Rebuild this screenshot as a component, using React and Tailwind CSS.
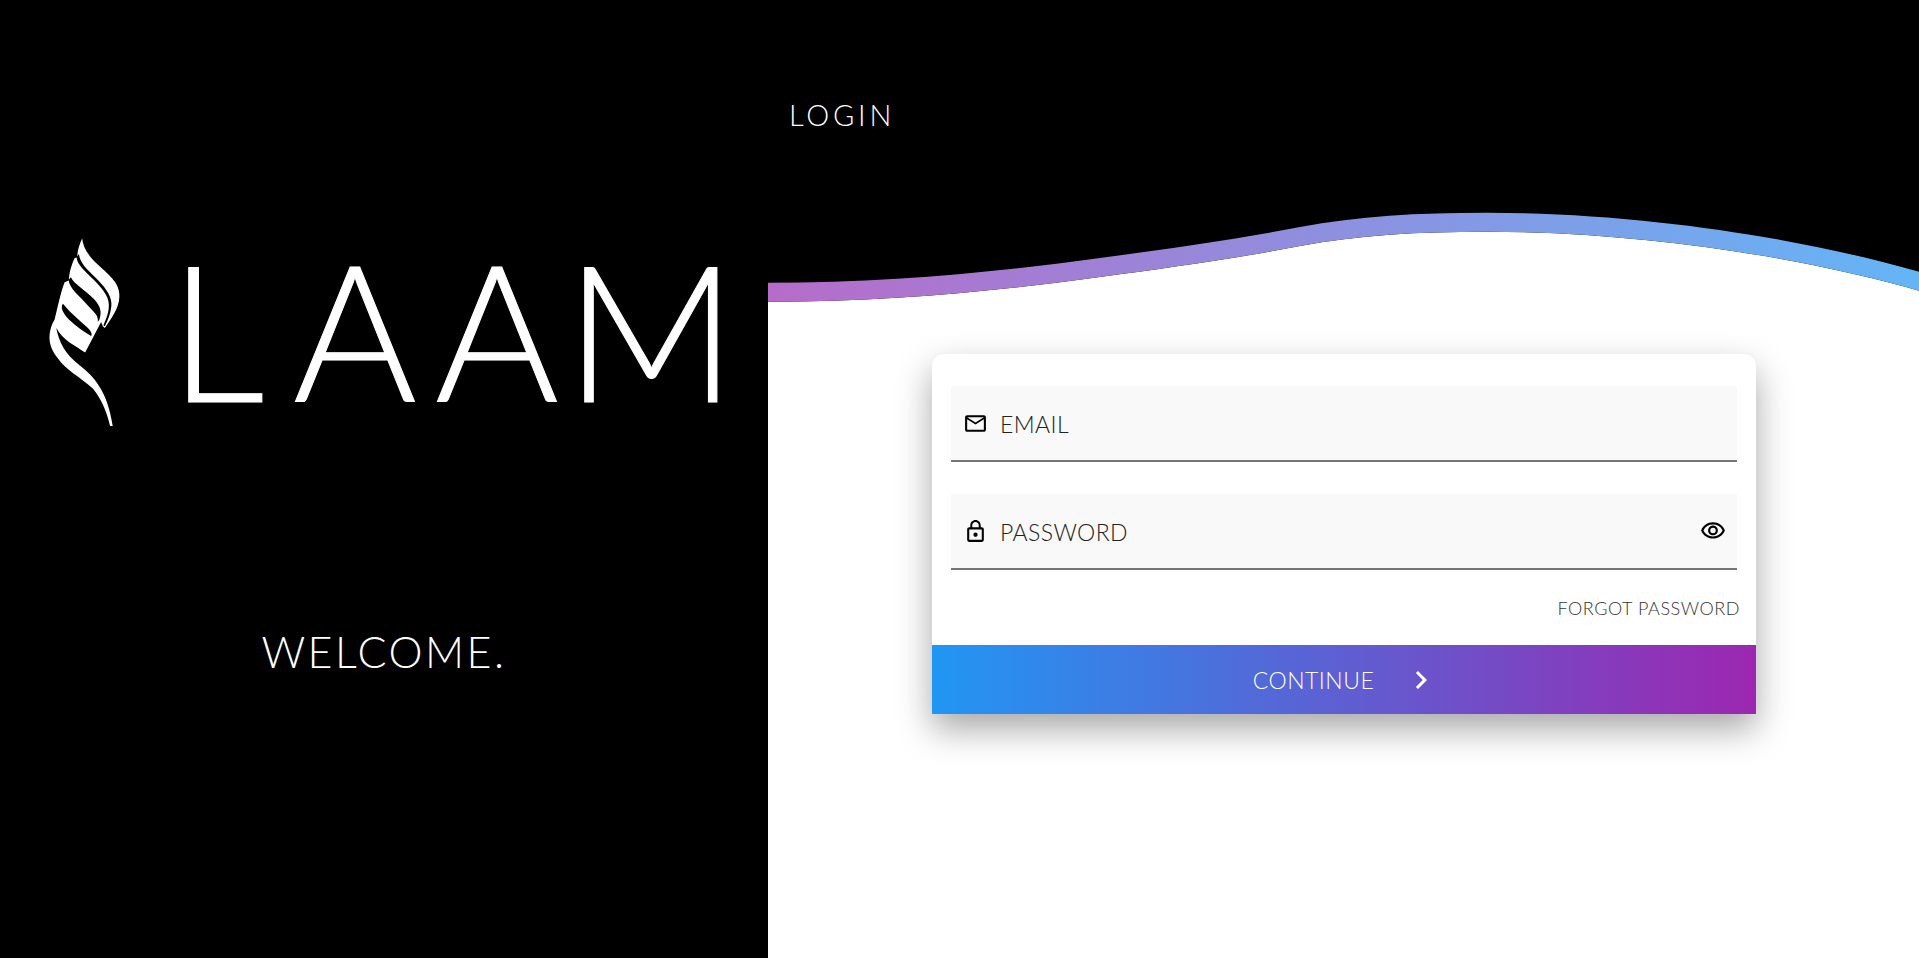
import React from 'react';
import { MdMailOutline, MdLockOutline, MdOutlineVisibility, MdChevronRight } from 'react-icons/md';

const Leaf = () => (
  <svg viewBox="55 35 220 570" className="w-[73px] h-[190px] shrink-0">
    <path
      fill="#fff"
      d="M158 38C160 60 172 85 200 112C235 145 270 170 270 208C272 245 245 280 226 308L220 303L215 290L167 382C135 360 100 345 80 308C88 350 105 385 150 420C195 455 235 500 250 603L242 603C232 560 218 525 190 490C150 455 110 435 85 400C62 370 55 345 62 315C65 300 70 290 75 282C85 240 95 195 105 170L118 165C118 145 125 120 135 98L143 95C143 75 150 55 158 38Z"
    />
    <path fill="#000" d="M141 95C143 118 165 135 195 165C225 195 242 220 238 248C236 270 228 285 222 300L226 303C238 280 247 255 246 232C244 205 222 180 200 158C175 133 152 115 148 85Z" />
    <path fill="#000" d="M117 163C120 190 150 210 175 240C195 262 208 270 205 290L210 282C218 260 213 242 195 222C165 192 135 177 124 155Z" />
    <path fill="#000" d="M100 235C92 245 98 262 118 282C140 303 165 320 185 332C190 326 183 315 172 305C150 285 125 265 100 235Z" />
  </svg>
);

const Field = ({ icon, label, right }) => (
  <div className="h-[76px] bg-[#f9f9f9] border-b-2 border-[#757575] flex items-center pl-[12px] pr-[11px]">
    <span className="w-[25px] flex justify-center text-black">{icon}</span>
    <span className="ml-[12px] pt-[2px] text-[23px] font-light text-[#222] tracking-[0.4px] uppercase">{label}</span>
    <span className="ml-auto text-black">{right}</span>
  </div>
);

export default function App() {
  return (
    <div className="flex w-full h-[958px] overflow-hidden font-['Lato',sans-serif]">
      <aside className="w-[768px] shrink-0 bg-black text-white flex flex-col">
        <div className="flex items-start pl-[48px] pt-[237px]">
          <Leaf />
          <div className="ml-[48px] mt-[6px] flex h-[170px] items-center text-[189px] font-light leading-none [-webkit-text-stroke:1px_#fff]">
            <span className="w-[124px]">L</span>
            <span className="w-[142px]">A</span>
            <span className="w-[130px]">A</span>
            <span>M</span>
          </div>
        </div>
        <p className="mt-[203px] text-center text-[43px] font-light leading-none tracking-[2.5px]">WELCOME.</p>
      </aside>

      <main className="flex-1 flex flex-col bg-white">
        <header className="h-[212px] bg-black pl-[21px] pt-[100px]">
          <h1 className="text-[29px] font-light leading-none tracking-[3.8px] text-white">LOGIN</h1>
        </header>
        <svg viewBox="0 212 1151 92" preserveAspectRatio="none" className="block w-full h-[92px] shrink-0">
          <defs>
            <linearGradient id="wave" x1="0" x2="1" y1="0" y2="0">
              <stop offset="0" stopColor="#b66cc9" />
              <stop offset="1" stopColor="#64b5f6" />
            </linearGradient>
          </defs>
          <rect x="0" y="212" width="1151" height="92" fill="#000" />
          <path fill="#fff" d="M0 301.7C120 301.7 230 291 332 277C400 268 470 258 532 246C590 235 650 231.7 718 231.7C880 231.7 1040 259 1151 290.7V304H0Z" />
          <path
            fill="url(#wave)"
            d="M0 282.7C120 282.7 230 272 332 258C400 249 470 239 532 227C590 216 650 212.7 718 212.7C880 212.7 1040 240 1151 271.7V290.7C1040 259 880 231.7 718 231.7C650 231.7 590 235 532 246C470 258 400 268 332 277C230 291 120 301.7 0 301.7Z"
          />
        </svg>
        <div className="flex-1 pl-[164px] pt-[50px]">
          <div className="w-[824px] bg-white rounded-t-[12px] shadow-[0_15px_35px_rgba(0,0,0,0.35)]">
            <div className="px-[19px] pt-[32px] flex flex-col gap-[32px]">
              <Field icon={<MdMailOutline size={25} />} label="Email" />
              <Field icon={<MdLockOutline size={25} />} label="Password" right={<MdOutlineVisibility size={26} className="block" />} />
            </div>
            <div className="h-[75px] pt-[2px] pr-[16px] flex items-center justify-end text-[18px] font-light text-[#333] tracking-[0.55px]">
              FORGOT PASSWORD
            </div>
            <button className="w-full h-[69px] flex items-center justify-center bg-linear-to-r/srgb from-[#2196f3] to-[#9c27b0] text-white text-[23px] font-light tracking-[0.5px]">
              <span className="pl-[4px] pt-[2px]">CONTINUE</span>
              <MdChevronRight size={36} className="ml-[29px]" />
            </button>
          </div>
        </div>
      </main>
    </div>
  );
}
